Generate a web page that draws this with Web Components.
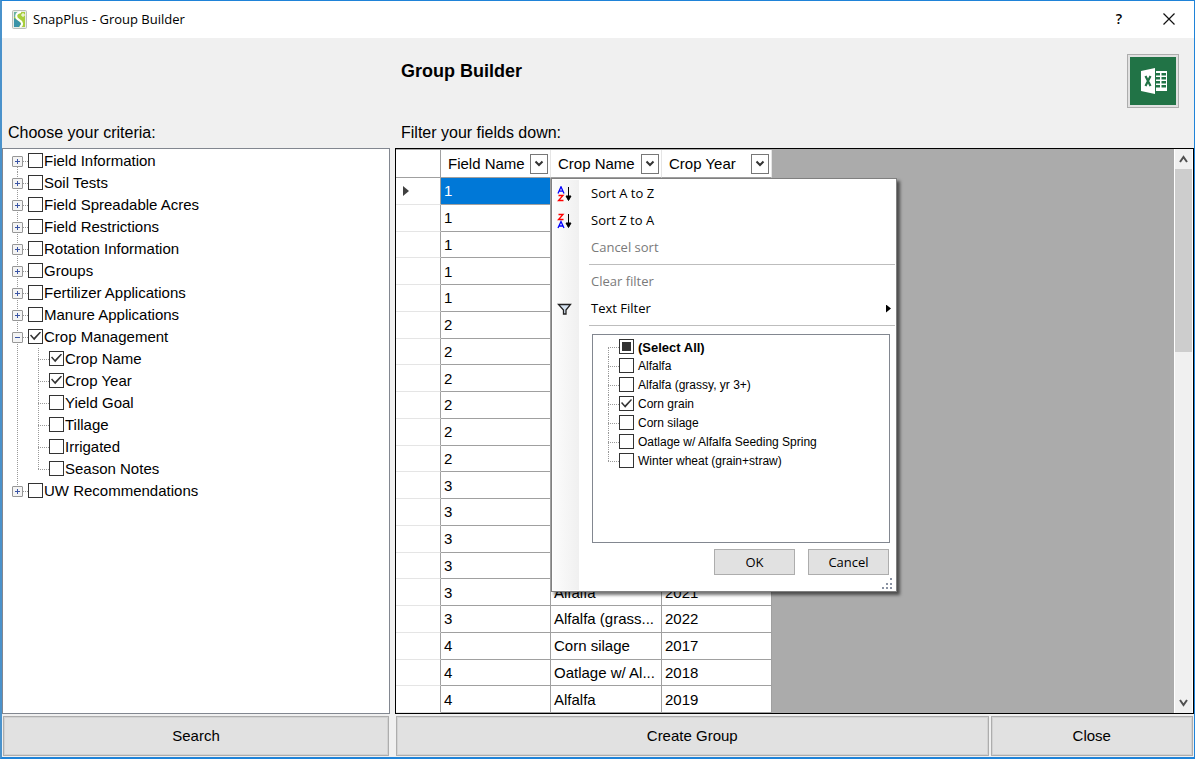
<!DOCTYPE html>
<html lang="en">
<head>
<meta charset="utf-8">
<title>SnapPlus - Group Builder</title>
<style>
html, body { height: 100%; margin: 0; }
body { font: 15px/22px "Liberation Sans", Arial, sans-serif; color: #000; background: #f0f0f0; }
</style>
</head>
<body>
<app-window></app-window>

<template id="t-window">
<style>
:host { display: flex; flex-direction: column; min-height: 100vh; box-sizing: border-box; border: 1px solid #1f83d8; border-left: 2px solid #4a92cb; border-bottom-width: 2px; }
main { flex: 1; display: grid; grid-template-columns: 388fr 799fr; grid-template-rows: 110px 1fr auto; column-gap: 5px; background: #f0f0f0; }
.intro { display: flex; flex-direction: column; justify-content: flex-end; padding: 0 6px 4px; font-size: 16px; }
.top { flex: 1; display: flex; justify-content: space-between; align-items: flex-start; padding: 16px 9px 0 0; }
h1 { margin: 6px 0 0; font-size: 18px; line-height: 22px; }
.actions { display: grid; gap: 2px; padding: 2px 1px 1px; }
.pair { grid-template-columns: 594fr 203fr; }
</style>
<title-bar>SnapPlus - Group Builder</title-bar>
<main>
  <div class="intro"><div>Choose your criteria:</div></div>
  <div class="intro"><div class="top"><h1>Group Builder</h1><excel-button></excel-button></div><div>Filter your fields down:</div></div>
  <criteria-tree></criteria-tree>
  <field-grid></field-grid>
  <div class="actions"><flat-button class="large">Search</flat-button></div>
  <div class="actions pair"><flat-button class="large">Create Group</flat-button><flat-button class="large">Close</flat-button></div>
</main>
</template>

<template id="t-title">
<style>
:host { display: flex; align-items: center; height: 37px; background: #fff; font: 13px/20px "Open Sans", "Noto Sans", sans-serif; }
.logo { margin: 0 6px 0 10px; }
.name { flex: 1; padding-bottom: 2px; }
button { width: 50px; height: 36px; padding: 0 0 2px; border: 0; background: none; font: 600 14px/20px "Open Sans", sans-serif; }
svg { display: block; margin: auto; }
</style>
<svg class="logo" width="15" height="19" viewBox="0 0 15 19"><rect x=".5" y=".5" width="14" height="18" rx="1" fill="#e8ece8" stroke="#b8bfb9"/><path d="M2 2h11v15H2z" fill="#a8ce3c"/><path d="M2 8l5 3 2 3-2 3H2z" fill="#3a94a8"/><path d="M2 2h4L4 7H2z" fill="#69b1a0"/><path d="M9 2C3 3 3 8 7 10s4 5 1 7" fill="none" stroke="#fff" stroke-width="2"/><path d="M11 3v4M9 5h4" stroke="#fff"/></svg>
<span class="name"><slot></slot></span>
<button type="button" aria-label="Help">?</button>
<button type="button" aria-label="Close window"><svg width="12" height="12"><path d="M.5.5l11 11M11.500 .5l-11 11" stroke="#111" stroke-width="1.200"/></svg></button>
</template>

<template id="t-excel">
<style>
:host { display: block; }
button { display: block; width: 52px; height: 54px; padding: 2px; border: 1px solid #adadad; background: #e1e1e1; box-sizing: border-box; }
svg { display: block; width: 100%; height: 100%; }
</style>
<button type="button" aria-label="Export to Excel"><svg viewBox="0 0 46 48" preserveAspectRatio="none"><path fill="#217346" d="M0 0h46v48H0z"/><path fill="#fff" d="M11 14l14-3v26l-14-3zM26 14h11v20H26z"/><path fill="#217346" d="M26 16h4v2.500h-4zM26 20h4v2.500h-4zM26 24h4v2.500h-4zM26 28h4v2.500h-4zM31.500 16H36v2.500h-4.500zM31.500 20H36v2.500h-4.500zM31.500 24H36v2.500h-4.500zM31.500 28H36v2.500h-4.500z"/><path d="M15.500 19l5 10M20.500 19l-5 10" stroke="#217346" stroke-width="2.200"/></svg></button>
</template>

<template id="t-button">
<style>
:host { display: block; }
button { display: block; width: 100%; height: 26px; padding: 0; border: 1px solid #adadad; background: #e1e1e1; color: inherit; font: inherit; box-sizing: border-box; }
:host(.large) button { height: 40px; box-shadow: inset 0 0 0 1px #d2d2d2; }
</style>
<button type="button"><slot></slot></button>
</template>

<template id="t-check">
<style>
:host { display: block; }
label { display: flex; align-items: center; gap: var(--check-gap, 1px); height: 100%; white-space: nowrap; }
input { appearance: none; display: grid; place-items: center; flex: none; width: 15px; height: 15px; margin: 0 0 2px; border: 1px solid #333; background: #fff; box-sizing: border-box; }
input::before { content: ""; display: block; }
input:checked::before { width: 11px; height: 9px; background: #333; clip-path: polygon(0 45%, 10% 34%, 36% 70%, 91% 0, 100% 10%, 38% 96%); }
input:indeterminate::before { width: 9px; height: 9px; background: #333; clip-path: none; }
</style>
<label><input type="checkbox"><span><slot></slot></span></label>
</template>

<template id="t-tree">
<style>
:host { display: block; background: #fff; border: 1px solid #828790; }
ul { list-style: none; margin: 0; padding: 1px 0 0; }
li { height: 22px; display: flex; align-items: center; padding-left: 9px; background: repeating-linear-gradient(#999 0 1px, transparent 1px 2px) 14px 0 / 1px 100% no-repeat; }
li.first { background-position: 14px 100%; background-size: 1px 50%; }
li.last { background-size: 1px 50%; }
button { width: 11px; height: 11px; padding: 0; border: 1px solid #979797; border-radius: 1px; background: #f4f4f4; box-sizing: border-box; }
svg { display: block; }
.arm { flex: none; width: 5px; height: 1px; background: repeating-linear-gradient(90deg, #999 0 1px, transparent 1px 2px); }
li.child { padding-left: 35px; background: repeating-linear-gradient(#999 0 1px, transparent 1px 2px) 14px 0 / 1px 100% no-repeat, repeating-linear-gradient(#999 0 1px, transparent 1px 2px) 35px 0 / 1px 100% no-repeat; }
li.end { background-size: 1px 100%, 1px 50%; }
li.child .arm { width: 11px; }
</style>
<ul></ul>
</template>

<template id="t-grid">
<style>
:host { display: flex; position: relative; background: #ababab; border: 1px solid #000; min-width: 0; }
.area { flex: 1; padding-top: 1px; min-width: 0; }
table { width: 376px; height: 100%; border-collapse: separate; border-spacing: 0; table-layout: fixed; background: #fff; line-height: 20px; }
th, td { padding: 1px 0 0 3px; text-align: left; font-weight: normal; white-space: nowrap; overflow: hidden; border-right: 1px solid #a0a0a0; border-bottom: 1px solid #a0a0a0; }
thead th { height: 27px; padding: 0 2px 0 7px; border-right-color: #e5e5e5; }
thead th:first-child { border-right-color: #a0a0a0; }
tbody th { padding-left: 7px; border-bottom-color: #e5e5e5; }
td.on { background: #0078d7; color: #fff; }
.head { display: flex; align-items: center; justify-content: space-between; }
.head button { flex: none; width: 18px; height: 20px; padding: 0; border: 1px solid #777; background: #fff; box-sizing: border-box; }
svg { display: block; margin: auto; }
filter-menu { position: absolute; left: 155px; top: 29px; }
</style>
<div class="area">
<table>
<colgroup><col style="width:45px"><col style="width:110px"><col style="width:111px"><col style="width:110px"></colgroup>
<thead><tr><th scope="col"></th></tr></thead>
<tbody></tbody>
</table>
</div>
<scroll-rail></scroll-rail>
<filter-menu></filter-menu>
</template>

<template id="t-rail">
<style>
:host { display: flex; flex-direction: column; width: 17px; border-right: 1px solid #fff; background: #f0f0f0; border-left: 1px solid #fff; }
button { width: 100%; height: 20px; padding: 0; border: 0; background: none; }
svg { display: block; margin: auto; }
.track { flex: 1; }
.thumb { height: 35%; background: #cdcdcd; }
</style>
<button type="button" aria-label="Scroll up"><svg width="9" height="8"><path d="M1 7l3.500-5L8 7" fill="none" stroke="#505050" stroke-width="2"/></svg></button>
<div class="track"><div class="thumb"></div></div>
<button type="button" aria-label="Scroll down"><svg width="9" height="8"><path d="M1 1l3.500 5L8 1" fill="none" stroke="#505050" stroke-width="2"/></svg></button>
</template>

<template id="t-item">
<style>
:host { display: block; }
button { display: flex; align-items: center; width: 100%; height: 27px; padding: 0 4px 0 0; border: 0; background: none; color: inherit; font: inherit; text-align: left; }
button:disabled { color: #7a7a7a; }
.icon { width: 38px; }
.icon ::slotted(svg) { display: block; margin-left: 4px; }
.text { flex: 1; padding-bottom: 2px; }
.more { display: none; width: 5px; height: 8px; background: #000; clip-path: polygon(0 0, 100% 50%, 0 100%); }
:host([submenu]) .more { display: block; }
</style>
<button type="button"><span class="icon"><slot name="icon"></slot></span><span class="text"><slot></slot></span><span class="more"></span></button>
</template>

<template id="t-menu">
<style>
:host { display: flex; flex-direction: column; width: 346px; height: 414px; box-sizing: border-box; padding: 1px; border: 1px solid #808080; background: linear-gradient(90deg, #fcfcfc, #f0f0f0) 1px 1px / 26px calc(100% - 2px) no-repeat #fff; box-shadow: 3px 3px 3px rgba(0,0,0,.55); font: 13px/20px "Open Sans", "Noto Sans", sans-serif; }
hr { width: 306px; height: 1px; margin: 3px 0 3px auto; border: 0; background: #bdbdbd; }
.list { flex: 1; margin: 5px 5px 0 39px; padding: 3px 0 0 15px; border: 1px solid #828790; font: 12px/19px "Liberation Sans", Arial, sans-serif; }
.row { display: flex; align-items: center; height: 19px; background: repeating-linear-gradient(#999 0 1px, transparent 1px 2px) 0 0 / 1px 100% no-repeat; --check-gap: 4px; }
.row:first-child { background-position: 0 100%; background-size: 1px 50%; font-size: 13px; font-weight: bold; }
.row:last-child { background-size: 1px 50%; }
.arm { width: 11px; height: 1px; background: repeating-linear-gradient(90deg, #999 0 1px, transparent 1px 2px); }
.foot { display: flex; justify-content: flex-end; gap: 13px; padding: 6px 6px 0 0; }
.foot flat-button { width: 81px; }
.grip { display: block; margin: 1px 0 0 auto; }
</style>
<menu-item><svg slot="icon" width="16" height="16" viewBox="0 0 16 16"><path d="M1 7.500L4 .8l3 6.700M2 5.200h4" fill="none" stroke="#00f" stroke-width="1.300"/><path d="M1.500 9.500H6l-4.500 5H6.500" fill="none" stroke="#f00" stroke-width="1.300"/><path d="M11.500 1v12M9 10h5l-2.500 4.500z" stroke="#000" stroke-width="1"/></svg>Sort A to Z</menu-item>
<menu-item><svg slot="icon" width="16" height="16" viewBox="0 0 16 16"><path d="M1.500 1.500H6l-4.500 5H6.500" fill="none" stroke="#f00" stroke-width="1.300"/><path d="M1 15L4 8.500 7 15M2 13h4" fill="none" stroke="#00f" stroke-width="1.300"/><path d="M11.500 1v12M9 10h5l-2.500 4.500z" stroke="#000" stroke-width="1"/></svg>Sort Z to A</menu-item>
<menu-item disabled>Cancel sort</menu-item>
<hr>
<menu-item disabled>Clear filter</menu-item>
<menu-item submenu><svg slot="icon" width="16" height="12" viewBox="0 0 16 12"><path d="M1.500 1.500h12L9 7v4H6.500V7z" fill="#d5e2f0" stroke="#222" stroke-width="1.300"/></svg>Text Filter</menu-item>
<hr>
<div class="list">
<div class="row"><span class="arm"></span><check-item mixed>(Select All)</check-item></div>
<div class="row"><span class="arm"></span><check-item>Alfalfa</check-item></div>
<div class="row"><span class="arm"></span><check-item>Alfalfa (grassy, yr 3+)</check-item></div>
<div class="row"><span class="arm"></span><check-item checked>Corn grain</check-item></div>
<div class="row"><span class="arm"></span><check-item>Corn silage</check-item></div>
<div class="row"><span class="arm"></span><check-item>Oatlage w/ Alfalfa Seeding Spring</check-item></div>
<div class="row"><span class="arm"></span><check-item>Winter wheat (grain+straw)</check-item></div>
</div>
<div class="foot"><flat-button>OK</flat-button><flat-button>Cancel</flat-button></div>
<svg class="grip" width="14" height="14"><path d="M9 2h2v2H9zM5 7h2v2H5zM9 7h2v2H9zM1 11h2v2H1zM5 11h2v2H5zM9 11h2v2H9z" fill="#8b93a3"/></svg>
</template>

<script>
class Base extends HTMLElement {
  constructor() {
    super();
    const tpl = document.getElementById(this.constructor.tpl);
    this.attachShadow({ mode: "open" }).append(tpl.content.cloneNode(true));
  }
  $(sel) { return this.shadowRoot.querySelector(sel); }
}

class CheckItem extends Base {
  static tpl = "t-check";
  connectedCallback() {
    const box = this.$("input");
    box.checked = this.hasAttribute("checked");
    box.indeterminate = this.hasAttribute("mixed");
  }
}

class MenuItem extends Base {
  static tpl = "t-item";
  connectedCallback() { this.$("button").disabled = this.hasAttribute("disabled"); }
}

class CriteriaTree extends Base {
  static tpl = "t-tree";
  connectedCallback() {
    const nodes = [
      ["Field Information"], ["Soil Tests"], ["Field Spreadable Acres"], ["Field Restrictions"],
      ["Rotation Information"], ["Groups"], ["Fertilizer Applications"], ["Manure Applications"],
      ["Crop Management", true, [["Crop Name", true], ["Crop Year", true], ["Yield Goal"], ["Tillage"], ["Irrigated"], ["Season Notes"]]],
      ["UW Recommendations"]
    ];
    const item = (t, on) => `<span class="arm"></span><check-item${on ? " checked" : ""}>${t}</check-item></li>`;
    this.$("ul").innerHTML = nodes.map(([text, on, kids], i) => {
      const edge = i === 0 ? "first" : i === nodes.length - 1 ? "last" : "";
      const sign = kids ? "M2 4.500h5" : "M2 4.500h5M4.500 2v5";
      return `<li class="${edge}"><button type="button" aria-label="${kids ? "Collapse" : "Expand"} ${text}"><svg width="9" height="9"><path d="${sign}" stroke="#3b55a5"/></svg></button>` + item(text, on) +
        (kids || []).map(([t, c], k) => `<li class="child${k === kids.length - 1 ? " end" : ""}">` + item(t, c)).join("");
    }).join("");
  }
}

class FieldGrid extends Base {
  static tpl = "t-grid";
  connectedCallback() {
    this.$("thead tr").insertAdjacentHTML("beforeend", ["Field Name", "Crop Name", "Crop Year"].map(n =>
      `<th scope="col"><div class="head">${n}<button type="button" aria-label="Filter ${n}"><svg width="10" height="8"><path d="M1.500 1.500L5 5l3.500-3.500" fill="none" stroke="#333" stroke-width="2"/></svg></button></div></th>`).join(""));
    const fields = [1, 1, 1, 1, 1, 2, 2, 2, 2, 2, 2, 3, 3, 3, 3, 3, 3, 4, 4, 4];
    const known = { 15: ["Alfalfa", 2021], 16: ["Alfalfa (grass...", 2022], 17: ["Corn silage", 2017], 18: ["Oatlage w/ Al...", 2018], 19: ["Alfalfa", 2019] };
    const arrow = `<svg style="margin:0" width="7" height="10"><path d="M0 0l6 5-6 5z" fill="#404040"/></svg>`;
    this.$("tbody").innerHTML = fields.map((f, i) => {
      const [crop, year] = known[i] || ["", ""];
      return `<tr><th scope="row">${i ? "" : arrow}</th><td${i ? "" : ' class="on"'}>${f}</td><td>${crop}</td><td>${year}</td></tr>`;
    }).join("");
  }
}

const simple = id => class extends Base { static tpl = id; };
customElements.define("flat-button", simple("t-button"));
customElements.define("title-bar", simple("t-title"));
customElements.define("excel-button", simple("t-excel"));
customElements.define("scroll-rail", simple("t-rail"));
customElements.define("check-item", CheckItem);
customElements.define("menu-item", MenuItem);
customElements.define("filter-menu", simple("t-menu"));
customElements.define("criteria-tree", CriteriaTree);
customElements.define("field-grid", FieldGrid);
customElements.define("app-window", simple("t-window"));
</script>
</body>
</html>
